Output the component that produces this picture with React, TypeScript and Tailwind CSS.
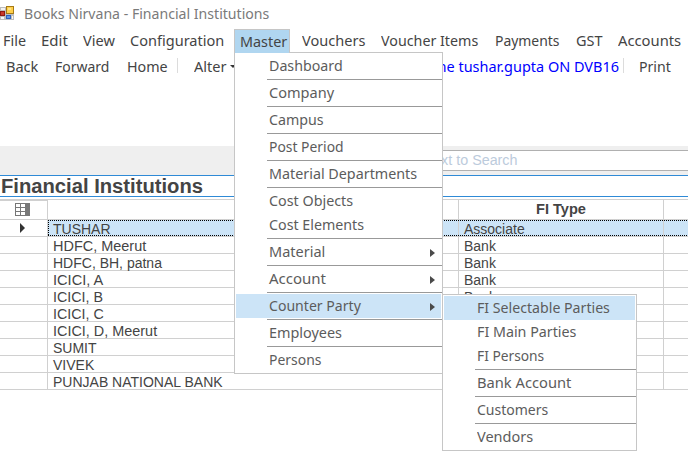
import { useLayoutEffect, useRef, useState } from "react";
import type { ReactNode } from "react";

/* Text condensed or widened to fill exactly `w` pixels. */
function Fit({ w, children }: { w: number; children: ReactNode }) {
  const ref = useRef<HTMLSpanElement>(null);
  const [scale, setScale] = useState(1);
  useLayoutEffect(() => {
    if (ref.current) setScale(w / ref.current.offsetWidth);
  }, [w]);
  return (
    <span className="block shrink-0 whitespace-pre" style={{ width: w }}>
      <span ref={ref} className="inline-block origin-left" style={{ transform: `scaleX(${scale})` }}>
        {children}
      </span>
    </span>
  );
}

type Item = { label: string; w: number; sub?: boolean; active?: boolean; sep?: boolean };

const master: Item[] = [
  { label: "Dashboard", w: 74, sep: true },
  { label: "Company", w: 65, sep: true },
  { label: "Campus", w: 55, sep: true },
  { label: "Post Period", w: 75, sep: true },
  { label: "Material Departments", w: 148, sep: true },
  { label: "Cost Objects", w: 84 },
  { label: "Cost Elements", w: 95, sep: true },
  { label: "Material", w: 56, sub: true, sep: true },
  { label: "Account", w: 57, sub: true, sep: true },
  { label: "Counter Party", w: 92, sub: true, active: true, sep: true },
  { label: "Employees", w: 73, sep: true },
  { label: "Persons", w: 52 },
];

const parties: Item[] = [
  { label: "FI Selectable Parties", w: 133, active: true },
  { label: "FI Main Parties", w: 99 },
  { label: "FI Persons", w: 67, sep: true },
  { label: "Bank Account", w: 94, sep: true },
  { label: "Customers", w: 71, sep: true },
  { label: "Vendors", w: 56 },
];

function Menu({ items }: { items: Item[] }) {
  return (
    <div className="border border-[#c6c6c6] bg-white py-px text-[15px] text-[#5c5c5c]">
      {items.map((it) => (
        <div key={it.label}>
          <div className={`mx-px flex h-6 justify-between pl-[33px] pr-1.5 leading-[22px] ${it.active ? "bg-[#cce4f7]" : ""}`}>
            <Fit w={it.w}>{it.label}</Fit>
            {it.sub && (
              <svg width="5" height="8" viewBox="0 0 5 8" className="mt-[9px]">
                <path d="M0 0L5 4L0 8Z" fill="#4a4a4a" />
              </svg>
            )}
          </div>
          {it.sep && <div className="my-px ml-8 h-px bg-[#999]" />}
        </div>
      ))}
    </div>
  );
}

const bar = [
  { label: "File", w: 23, cell: "w-[38px]" },
  { label: "Edit", w: 27, cell: "w-[42px]" },
  { label: "View", w: 32, cell: "w-[47px]" },
  { label: "Configuration", w: 94, cell: "w-[104px]" },
  { label: "Master", w: 47, cell: "w-[68px]", active: true },
  { label: "Vouchers", w: 63, cell: "w-[79px]" },
  { label: "Voucher Items", w: 97, cell: "w-[114px]" },
  { label: "Payments", w: 65, cell: "w-[81px]" },
  { label: "GST", w: 27, cell: "w-[42px]" },
  { label: "Accounts", w: 63, cell: "w-[70px]" },
];

/* The type column ends where the submenu covers it. */
const rows = [
  { name: "TUSHAR", w: 58, type: "Associate", tw: 61 },
  { name: "HDFC, Meerut", w: 93, type: "Bank", tw: 32 },
  { name: "HDFC, BH, patna", w: 109, type: "Bank", tw: 32 },
  { name: "ICICI, A", w: 50, type: "Bank", tw: 32 },
  { name: "ICICI, B", w: 50, type: "Bank", tw: 32 },
  { name: "ICICI, C", w: 51, type: "", tw: 0 },
  { name: "ICICI, D, Meerut", w: 104, type: "", tw: 0 },
  { name: "SUMIT", w: 44, type: "", tw: 0 },
  { name: "VIVEK", w: 41, type: "", tw: 0 },
  { name: "PUNJAB NATIONAL BANK", w: 170, type: "", tw: 0 },
];

function AppIcon() {
  return (
    <svg width="14" height="14" viewBox="0 0 14 14" shapeRendering="crispEdges">
      <rect x="0" y="1" width="14" height="13" fill="#bdbdbd" />
      <rect x="1" y="2" width="4" height="2" fill="#f2f2f2" />
      <rect x="0" y="5" width="5" height="5" fill="#8e1b12" />
      <rect x="1" y="6" width="3" height="3" fill="#c9382a" />
      <rect x="6" y="0" width="8" height="8" fill="#a67a16" />
      <rect x="7" y="1" width="6" height="6" fill="#ffcf4a" />
      <rect x="8" y="2" width="3" height="2" fill="#ffe48c" />
      <rect x="1" y="11" width="3" height="2" fill="#f8f8f8" />
      <rect x="12" y="10" width="1" height="3" fill="#f8f8f8" />
      <rect x="6" y="9" width="5" height="4" fill="#2d62bd" />
      <rect x="7" y="10" width="3" height="2" fill="#5d93e6" />
    </svg>
  );
}

export default function App() {
  return (
    <div className="relative h-[470px] w-[688px] overflow-hidden bg-white font-['Noto_Sans',sans-serif] text-[15px] text-[#444]">
      <header className="flex h-7 gap-2.5 text-[14.5px] leading-[26px] text-[#7a7a7a]">
        <div className="pt-1.5">
          <AppIcon />
        </div>
        <Fit w={245}>Books Nirvana - Financial Institutions</Fit>
      </header>

      <nav className="flex h-6 pl-[3px] pt-px leading-[23px]">
        {bar.map((b) => (
          <div key={b.label} className={`shrink-0 ${b.cell}`}>
            {b.active ? (
              <div className="h-[23px] w-14 border border-b-0 border-[#c6c6c6] bg-[#b0d6f0] pl-[5px] leading-[22px]">
                <Fit w={b.w}>{b.label}</Fit>
              </div>
            ) : (
              <Fit w={b.w}>{b.label}</Fit>
            )}
          </div>
        ))}
      </nav>

      <div className="flex h-[94px] items-start pl-1.5 pt-0.5 leading-6">
        <div className="w-12"><Fit w={32}>Back</Fit></div>
        <div className="w-[73px] pl-px"><Fit w={54}>Forward</Fit></div>
        <div className="w-[50px]"><Fit w={41}>Home</Fit></div>
        <div className="mt-1 h-[15px] w-px bg-[#dcdcdc]" />
        <div className="ml-4 w-9"><Fit w={33}>Alter</Fit></div>
        <svg width="6" height="3" viewBox="0 0 6 3" className="mt-[11px]">
          <path d="M0 0H6L3 3Z" fill="#333" />
        </svg>
        <div className="ml-[197px] w-[190px] text-[#0000ff]"><Fit w={186}>me tushar.gupta ON DVB16</Fit></div>
        <div className="mt-1 h-[15px] w-px bg-[#dcdcdc]" />
        <div className="ml-[15px]"><Fit w={32}>Print</Fit></div>
      </div>

      <div className="flex h-[29px] justify-end bg-[#efefef] pt-1 font-['Liberation_Sans',Arial,sans-serif]">
        <div className="flex h-[21px] w-[290px] items-center border-y border-[#b0b0b0] bg-white pl-[28px] text-[14px] leading-[19px] text-[#bccbdc]">
          <Fit w={92}>Text to Search</Fit>
        </div>
      </div>

      <h1 className="h-[22px] border-y border-[#2f8ad6] pl-px font-['Liberation_Sans',Arial,sans-serif] text-[19.5px] font-bold leading-[21px]">
        <Fit w={202}>Financial Institutions</Fit>
      </h1>

      <main className="pt-0.5 font-['Liberation_Sans',Arial,sans-serif] text-[14px]">
        <div className="flex h-[21px] border-y border-[#d0d0d0]">
          <div className="flex w-12 justify-center border-r border-t border-[#d0d0d0] pr-0.5 pt-0.5">
            <svg width="15" height="13" viewBox="0 0 15 13" shapeRendering="crispEdges">
              <rect x="0" y="0" width="15" height="13" fill="#777" />
              <path d="M1 1h4v3H1zM6 1h4v3H6zM1 5h4v3H1zM6 5h4v3H6zM1 9h4v3H1zM6 9h4v3H6z" fill="#fff" />
            </svg>
          </div>
          <div className="w-[411px] border-r border-[#d0d0d0]" />
          <div className="flex w-[205px] justify-center border-r border-[#d0d0d0] font-bold leading-[19px]">
            <Fit w={50}>FI Type</Fit>
          </div>
        </div>
        {rows.map((r, i) => (
          <div key={r.name} className="flex h-[17px] border-b border-[#d0d0d0] leading-[18px]">
            <div className="flex w-12 justify-center border-r border-[#d0d0d0] pr-0.5">
              {i === 0 && (
                <svg width="5" height="10" viewBox="0 0 5 10" className="mt-[3px]">
                  <path d="M0 0L5 5L0 10Z" fill="#333" />
                </svg>
              )}
            </div>
            <div className={`relative flex flex-1 ${i === 0 ? "bg-[#cce4f7]" : ""}`}>
              <div className="w-[411px] border-r border-[#d0d0d0] pl-[5px]"><Fit w={r.w}>{r.name}</Fit></div>
              <div className="w-[205px] border-r border-[#d0d0d0] pl-[5px]">{r.type && <Fit w={r.tw}>{r.type}</Fit>}</div>
              {i === 0 && (
                <svg width="640" height="16" className="absolute left-0 top-0" shapeRendering="crispEdges">
                  <path d="M0 0.5H640M0 15.5H640M0.5 0V16" stroke="#000" strokeDasharray="1 1" fill="none" />
                </svg>
              )}
            </div>
          </div>
        ))}
      </main>

      <div className="absolute left-[234px] top-[52px] w-[209px]">
        <Menu items={master} />
        <div className="absolute left-px top-0 h-px w-[54px] bg-[#b0d6f0]" />
      </div>
      <div className="absolute left-[442px] top-[294px] w-[195px]">
        <Menu items={parties} />
      </div>
    </div>
  );
}
